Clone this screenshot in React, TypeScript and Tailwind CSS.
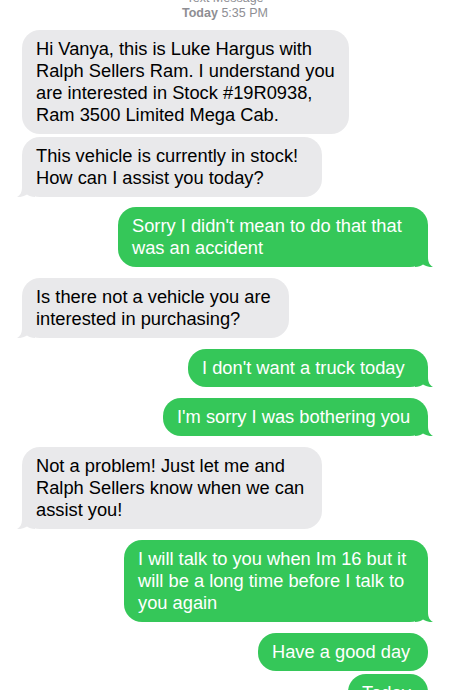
import React from "react";

type Msg = {
  side: "in" | "out";
  lines: string[];
  w: string;
  mt: string;
  tail: boolean;
};

const msgs: Msg[] = [
  {
    side: "in",
    lines: [
      "Hi Vanya, this is Luke Hargus with",
      "Ralph Sellers Ram. I understand you",
      "are interested in Stock #19R0938,",
      "Ram 3500 Limited Mega Cab.",
    ],
    w: "w-[327px]",
    mt: "mt-0",
    tail: false,
  },
  {
    side: "in",
    lines: ["This vehicle is currently in stock!", "How can I assist you today?"],
    w: "w-[300px]",
    mt: "mt-[3px]",
    tail: true,
  },
  {
    side: "out",
    lines: ["Sorry I didn't mean to do that that", "was an accident"],
    w: "w-[310px]",
    mt: "mt-[10px]",
    tail: true,
  },
  {
    side: "in",
    lines: ["Is there not a vehicle you are", "interested in purchasing?"],
    w: "w-[267px]",
    mt: "mt-[11px]",
    tail: true,
  },
  {
    side: "out",
    lines: ["I don't want a truck today"],
    w: "w-[240px]",
    mt: "mt-[11px]",
    tail: true,
  },
  {
    side: "out",
    lines: ["I'm sorry I was bothering you"],
    w: "w-[265px]",
    mt: "mt-[11px]",
    tail: true,
  },
  {
    side: "in",
    lines: [
      "Not a problem! Just let me and",
      "Ralph Sellers know when we can",
      "assist you!",
    ],
    w: "w-[300px]",
    mt: "mt-[11px]",
    tail: true,
  },
  {
    side: "out",
    lines: [
      "I will talk to you when Im 16 but it",
      "will be a long time before I talk to",
      "you again",
    ],
    w: "w-[304px]",
    mt: "mt-[11px]",
    tail: true,
  },
  {
    side: "out",
    lines: ["Have a good day"],
    w: "w-[170px]",
    mt: "mt-[11px]",
    tail: false,
  },
  {
    side: "out",
    lines: ["Today"],
    w: "w-[80px]",
    mt: "mt-[3px]",
    tail: true,
  },
];

function Tail({ side }: { side: "in" | "out" }) {
  const fill = side === "in" ? "#e9e9eb" : "#35c759";
  return (
    <svg
      width="18"
      height="18"
      viewBox="0 0 18 18"
      className={
        side === "in"
          ? "absolute bottom-0 -left-[5px]"
          : "absolute bottom-0 -right-[5px] -scale-x-100"
      }
    >
      <path
        d="M5 0 L5 8 C5 13 3.5 16 0 18 C4 18.4 7.5 17.2 10 15.6 C12 17.2 14.5 18 18 18 L18 0 Z"
        fill={fill}
      />
    </svg>
  );
}

function Bubble({ m }: { m: Msg }) {
  const isIn = m.side === "in";
  return (
    <div className={`flex ${isIn ? "justify-start" : "justify-end"} ${m.mt}`}>
      <div
        className={`relative ${m.w} rounded-[18px] pl-[14px] py-[8px] text-[18.3px] leading-[22px] whitespace-nowrap ${
          isIn ? "bg-[#e9e9eb] text-black" : "bg-[#35c759] text-white"
        }`}
      >
        {m.tail && <Tail side={m.side} />}
        <div className="relative">
          {m.lines.map((l, i) => (
            <div key={i}>{l}</div>
          ))}
        </div>
      </div>
    </div>
  );
}

export default function App() {
  return (
    <div
      className="w-[450px] h-[690px] overflow-hidden bg-white px-[22px]"
      style={{ fontFamily: '"Liberation Sans", Arial, sans-serif' }}
    >
      <div className="-mt-[9px] mb-[9px] flex flex-col items-center text-[12.5px] leading-[15px] text-[#8e8e93]">
        <div>Text Message</div>
        <div>
          <span className="font-semibold">Today</span> 5:35 PM
        </div>
      </div>
      <div className="flex flex-col">
        {msgs.map((m, i) => (
          <Bubble key={i} m={m} />
        ))}
      </div>
    </div>
  );
}
